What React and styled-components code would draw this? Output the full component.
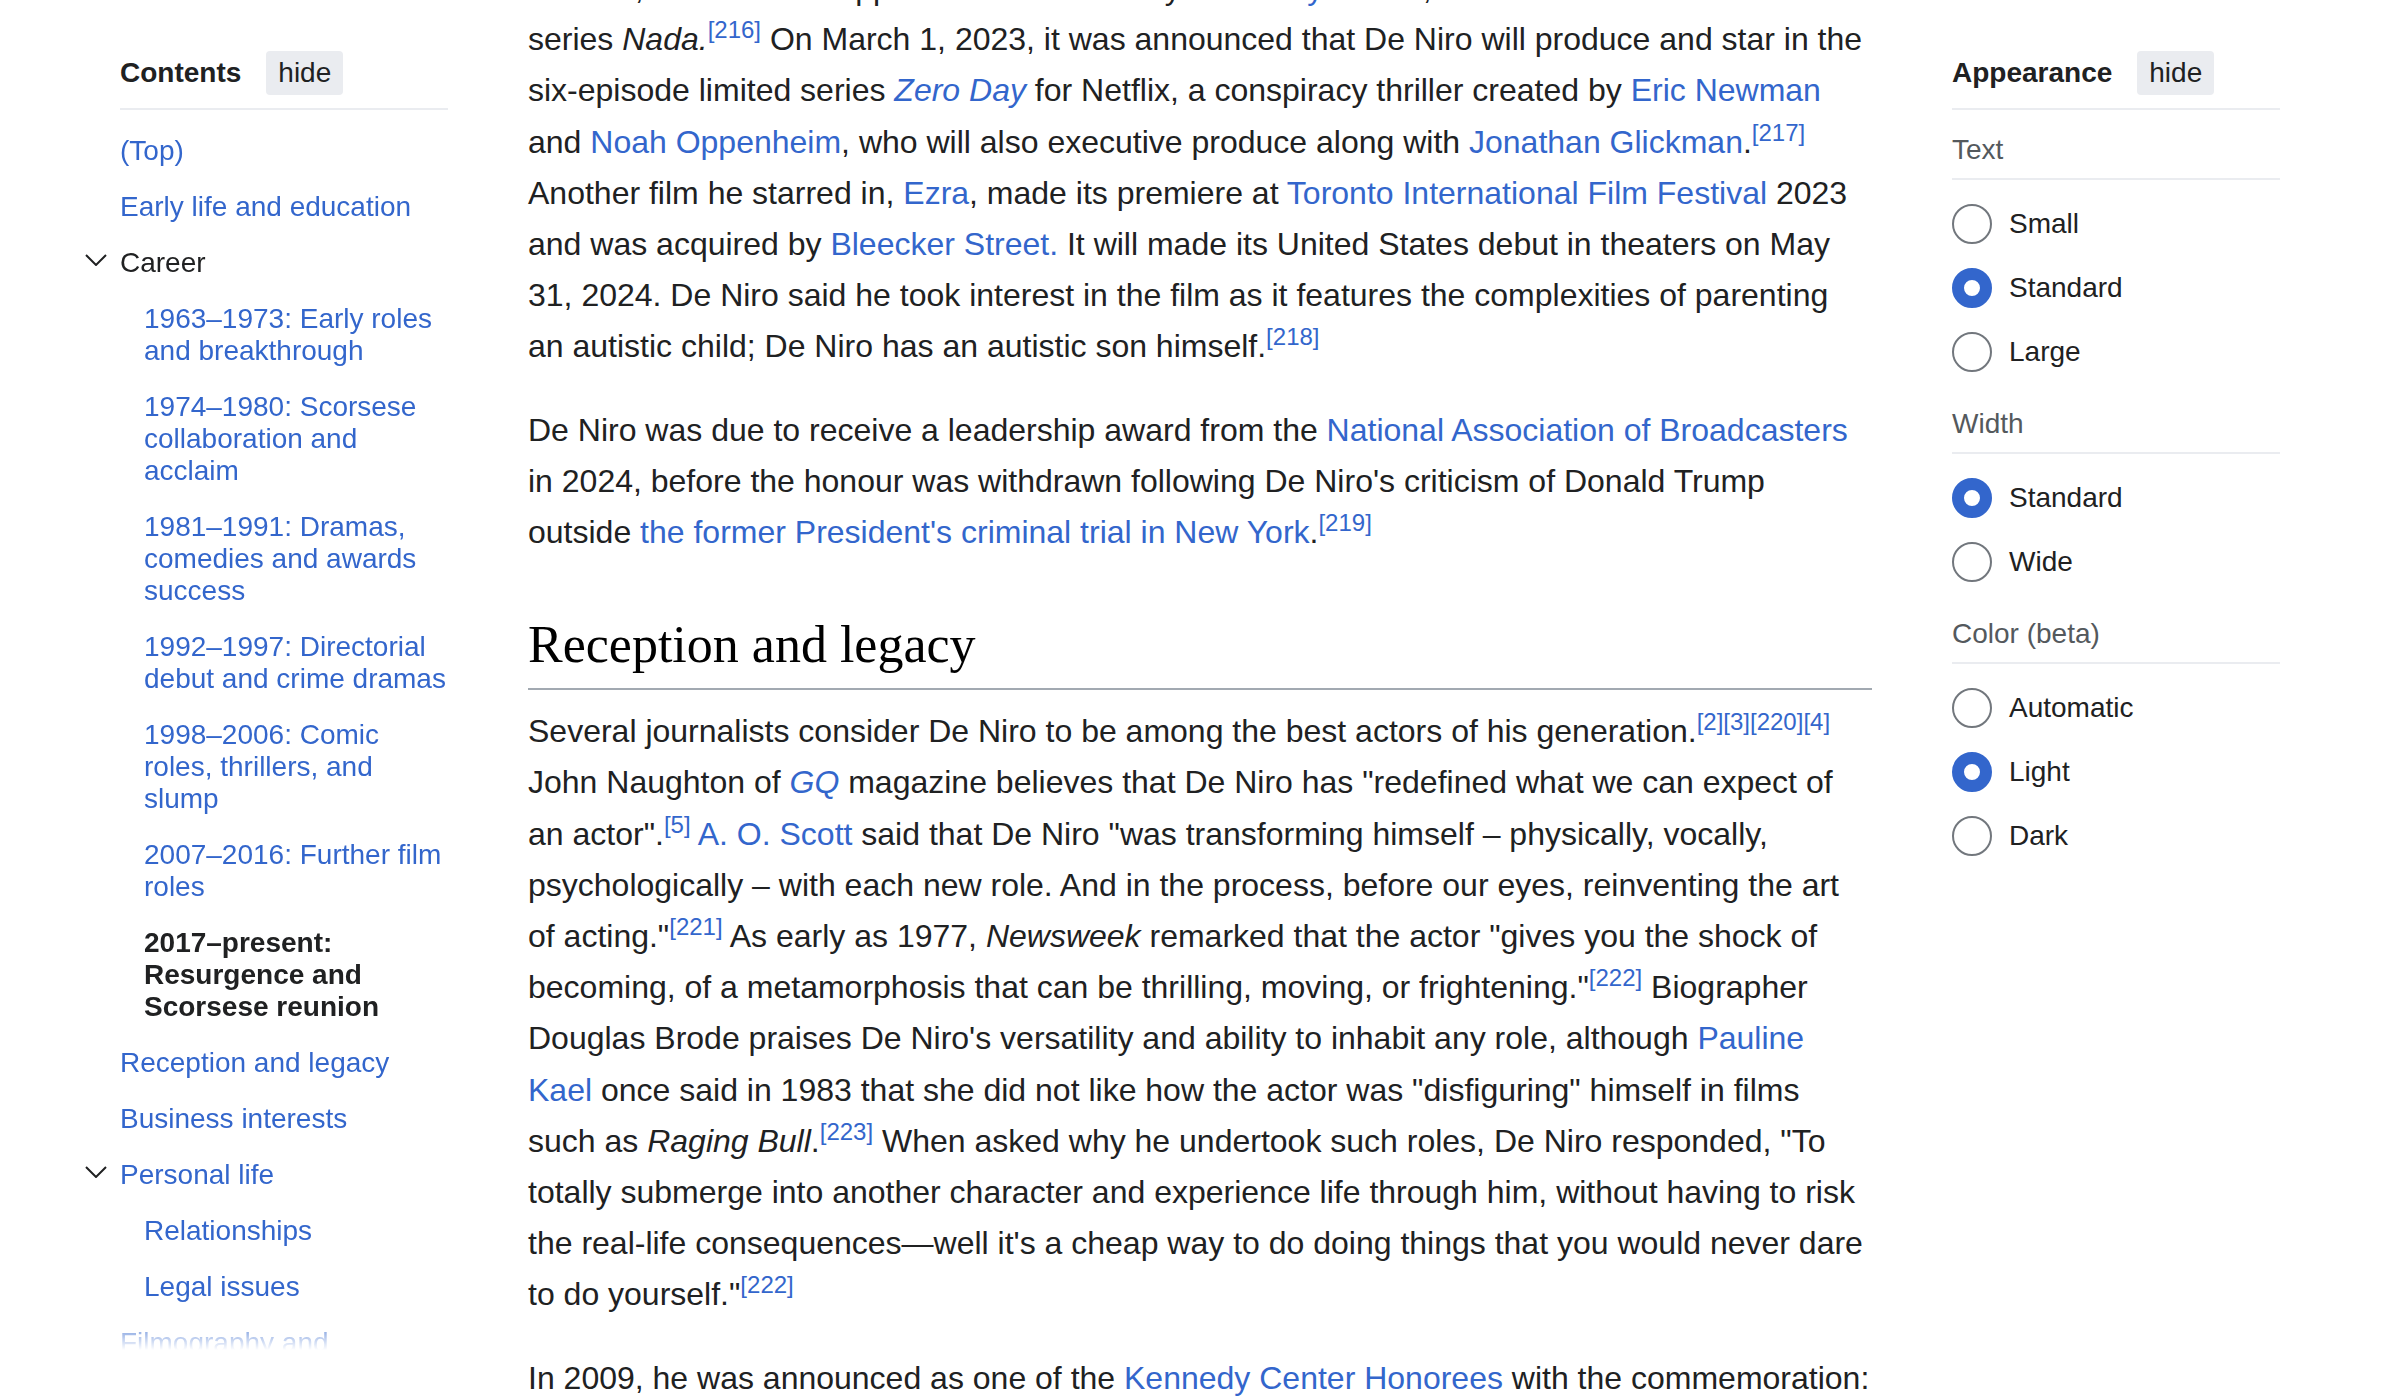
import styled, { createGlobalStyle } from 'styled-components'

const GlobalStyle = createGlobalStyle`
  *, *::before, *::after {
    box-sizing: border-box;
  }

  html,
  body {
    margin: 0;
    padding: 0;
    background: #fff;
  }

  body {
    font-family: 'Liberation Sans', Arial, sans-serif;
    color: #202122;
  }
`

const toc = [
  { label: '(Top)' },
  { label: 'Early life and education' },
  {
    label: 'Career',
    plain: true,
    children: [
      { label: '1963–1973: Early roles and breakthrough' },
      { label: '1974–1980: Scorsese collaboration and acclaim' },
      { label: '1981–1991: Dramas, comedies and awards success' },
      { label: '1992–1997: Directorial debut and crime dramas' },
      { label: '1998–2006: Comic roles, thrillers, and slump' },
      { label: '2007–2016: Further film roles' },
      { label: '2017–present: Resurgence and Scorsese reunion', active: true },
    ],
  },
  { label: 'Reception and legacy' },
  { label: 'Business interests' },
  {
    label: 'Personal life',
    children: [{ label: 'Relationships' }, { label: 'Legal issues' }],
  },
  { label: 'Filmography and accolades' },
]

const appearance = [
  { title: 'Text', options: ['Small', 'Standard', 'Large'], selected: 'Standard' },
  { title: 'Width', options: ['Standard', 'Wide'], selected: 'Standard' },
  {
    title: 'Color (beta)',
    options: ['Automatic', 'Light', 'Dark'],
    selected: 'Light',
  },
]

const Chevron = () => (
  <svg width="22" height="12" viewBox="0 0 22 12" aria-hidden="true">
    <polyline
      points="1,1 11,11 21,1"
      fill="none"
      stroke="#202122"
      strokeWidth="2"
    />
  </svg>
)

const TocEntry = ({ item, level }) => (
  <>
    <TocItem $level={level}>
      {item.children && (
        <Toggle>
          <Chevron />
        </Toggle>
      )}
      {item.active ? (
        <Current>{item.label}</Current>
      ) : item.plain ? (
        <span>{item.label}</span>
      ) : (
        <TocLink href="#">{item.label}</TocLink>
      )}
    </TocItem>
    {item.children &&
      item.children.map((child) => (
        <TocEntry key={child.label} item={child} level={2} />
      ))}
  </>
)

const App = () => {
  return (
    <>
      <GlobalStyle />
      <Page>
        <Sidebar>
          <PanelHeader>
            <PanelTitle>Contents</PanelTitle>
            <HideButton>hide</HideButton>
          </PanelHeader>
          <TocList>
            {toc.map((item) => (
              <TocEntry key={item.label} item={item} level={1} />
            ))}
          </TocList>
        </Sidebar>

        <Article>
          <Para>
            In 2023, De Niro also appeared in the comedy{' '}
            <Link href="#">About My Father</Link>, and had a role in the limited
            series <i>Nada.</i>
            <Ref>
              <Link href="#">[216]</Link>
            </Ref>{' '}
            On March 1, 2023, it was announced that De Niro will produce and
            star in the six-episode limited series{' '}
            <i>
              <Link href="#">Zero Day</Link>
            </i>{' '}
            for Netflix, a conspiracy thriller created by{' '}
            <Link href="#">Eric Newman</Link> and{' '}
            <Link href="#">Noah Oppenheim</Link>, who will also executive
            produce along with <Link href="#">Jonathan Glickman</Link>.
            <Ref>
              <Link href="#">[217]</Link>
            </Ref>{' '}
            Another film he starred in, <Link href="#">Ezra</Link>, made its
            premiere at <Link href="#">Toronto International Film Festival</Link>{' '}
            2023 and was acquired by <Link href="#">Bleecker Street.</Link> It
            will made its United States debut in theaters on May 31, 2024. De
            Niro said he took interest in the film as it features the
            complexities of parenting an autistic child; De Niro has an autistic
            son himself.
            <Ref>
              <Link href="#">[218]</Link>
            </Ref>
          </Para>
          <Para>
            De Niro was due to receive a leadership award from the{' '}
            <Link href="#">National Association of Broadcasters</Link> in 2024,
            before the honour was withdrawn following De Niro's criticism of
            Donald Trump outside{' '}
            <Link href="#">the former President's criminal trial in New York</Link>
            .
            <Ref>
              <Link href="#">[219]</Link>
            </Ref>
          </Para>

          <SectionHeading>Reception and legacy</SectionHeading>

          <Para>
            Several journalists consider De Niro to be among the best actors of
            his generation.
            <Ref>
              <Link href="#">[2]</Link>
              <Link href="#">[3]</Link>
              <Link href="#">[220]</Link>
              <Link href="#">[4]</Link>
            </Ref>{' '}
            John Naughton of{' '}
            <i>
              <Link href="#">GQ</Link>
            </i>{' '}
            magazine believes that De Niro has "redefined what we can expect of
            an actor".
            <Ref>
              <Link href="#">[5]</Link>
            </Ref>{' '}
            <Link href="#">A. O. Scott</Link> said that De Niro "was
            transforming himself – physically, vocally, psychologically – with
            each new role. And in the process, before our eyes, reinventing the
            art of acting."
            <Ref>
              <Link href="#">[221]</Link>
            </Ref>{' '}
            As early as 1977, <i>Newsweek</i> remarked that the actor "gives you
            the shock of becoming, of a metamorphosis that can be thrilling,
            moving, or frightening."
            <Ref>
              <Link href="#">[222]</Link>
            </Ref>{' '}
            Biographer Douglas Brode praises De Niro's versatility and ability to
            inhabit any role, although <Link href="#">Pauline Kael</Link> once
            said in 1983 that she did not like how the actor was "disfiguring"
            himself in films such as <i>Raging Bull</i>.
            <Ref>
              <Link href="#">[223]</Link>
            </Ref>{' '}
            When asked why he undertook such roles, De Niro responded, "To
            totally submerge into another character and experience life through
            him, without having to risk the real-life consequences—well it's a
            cheap way to do doing things that you would never dare to do
            yourself."
            <Ref>
              <Link href="#">[222]</Link>
            </Ref>
          </Para>
          <Para>
            In 2009, he was announced as one of the{' '}
            <Link href="#">Kennedy Center Honorees</Link> with the
            commemoration:
          </Para>
        </Article>

        <Sidebar>
          <PanelHeader>
            <PanelTitle>Appearance</PanelTitle>
            <HideButton>hide</HideButton>
          </PanelHeader>
          {appearance.map((group) => (
            <Section key={group.title}>
              <SectionLabel>{group.title}</SectionLabel>
              <RadioList>
                {group.options.map((option) => (
                  <RadioRow key={option}>
                    <RadioDot $checked={option === group.selected} />
                    {option}
                  </RadioRow>
                ))}
              </RadioList>
            </Section>
          ))}
        </Sidebar>
      </Page>
    </>
  )
}

const Page = styled.div`
  display: grid;
  grid-template-columns: 328px 1344px 328px;
  column-gap: 80px;
  align-items: start;
  padding: 0 120px;
  height: 1398px;
  overflow: hidden;
`

const Sidebar = styled.aside`
  padding-top: 51px;
  font-size: 28px;
  line-height: 32px;
`

const PanelHeader = styled.div`
  display: flex;
  align-items: center;
  gap: 25px;
  padding-bottom: 13px;
  border-bottom: 2px solid #eaecf0;
`

const PanelTitle = styled.h2`
  margin: 0;
  font-size: 28px;
  line-height: 32px;
  font-weight: 700;
  color: #202122;
`

const HideButton = styled.button`
  font-family: inherit;
  font-size: 28px;
  line-height: 32px;
  padding: 6px 12px;
  border: 0;
  border-radius: 4px;
  background: #eaecf0;
  color: #202122;
`

const TocList = styled.ul`
  list-style: none;
  margin: 0 0 0 -40px;
  padding: 13px 0 0 40px;
  height: 1240px;
  overflow: hidden;
  mask-image: linear-gradient(to bottom, #000 calc(100% - 36px), transparent);
`

const TocItem = styled.li`
  position: relative;
  padding: 12px 0 12px ${(p) => (p.$level === 2 ? 24 : 0)}px;
  color: #202122;
`

const Toggle = styled.span`
  position: absolute;
  left: -35px;
  top: 19px;
  display: flex;
`

const TocLink = styled.a`
  color: #36c;
  text-decoration: none;
`

const Current = styled.span`
  font-weight: 700;
  color: #202122;
`

const Article = styled.main`
  margin-top: -37px;
  font-size: 32px;
  line-height: 51.2px;
  color: #202122;
`

const Para = styled.p`
  margin: 0 0 32px;
`

const SectionHeading = styled.h2`
  margin: 54px 0 16px;
  padding-bottom: 10px;
  border-bottom: 2px solid #a2a9b1;
  font-family: 'Liberation Serif', 'Times New Roman', serif;
  font-weight: 400;
  font-size: 52px;
  line-height: 66px;
  color: #000;
`

const Link = styled.a`
  color: #36c;
  text-decoration: none;
`

const Ref = styled.sup`
  position: relative;
  top: -12px;
  vertical-align: baseline;
  font-size: 24px;
  line-height: 1;
`

const Section = styled.section`
  padding-top: 24px;
`

const SectionLabel = styled.div`
  padding-bottom: 12px;
  border-bottom: 2px solid #eaecf0;
  color: #54595d;
`

const RadioList = styled.div`
  display: flex;
  flex-direction: column;
  gap: 24px;
  padding: 24px 0 12px;
`

const RadioRow = styled.label`
  display: flex;
  align-items: center;
  gap: 17px;
  color: #202122;
`

const RadioDot = styled.span`
  flex: none;
  width: 40px;
  height: 40px;
  border-radius: 50%;
  background: #fff;
  border: ${(p) => (p.$checked ? '12px solid #36c' : '2px solid #72777d')};
`

export default App
